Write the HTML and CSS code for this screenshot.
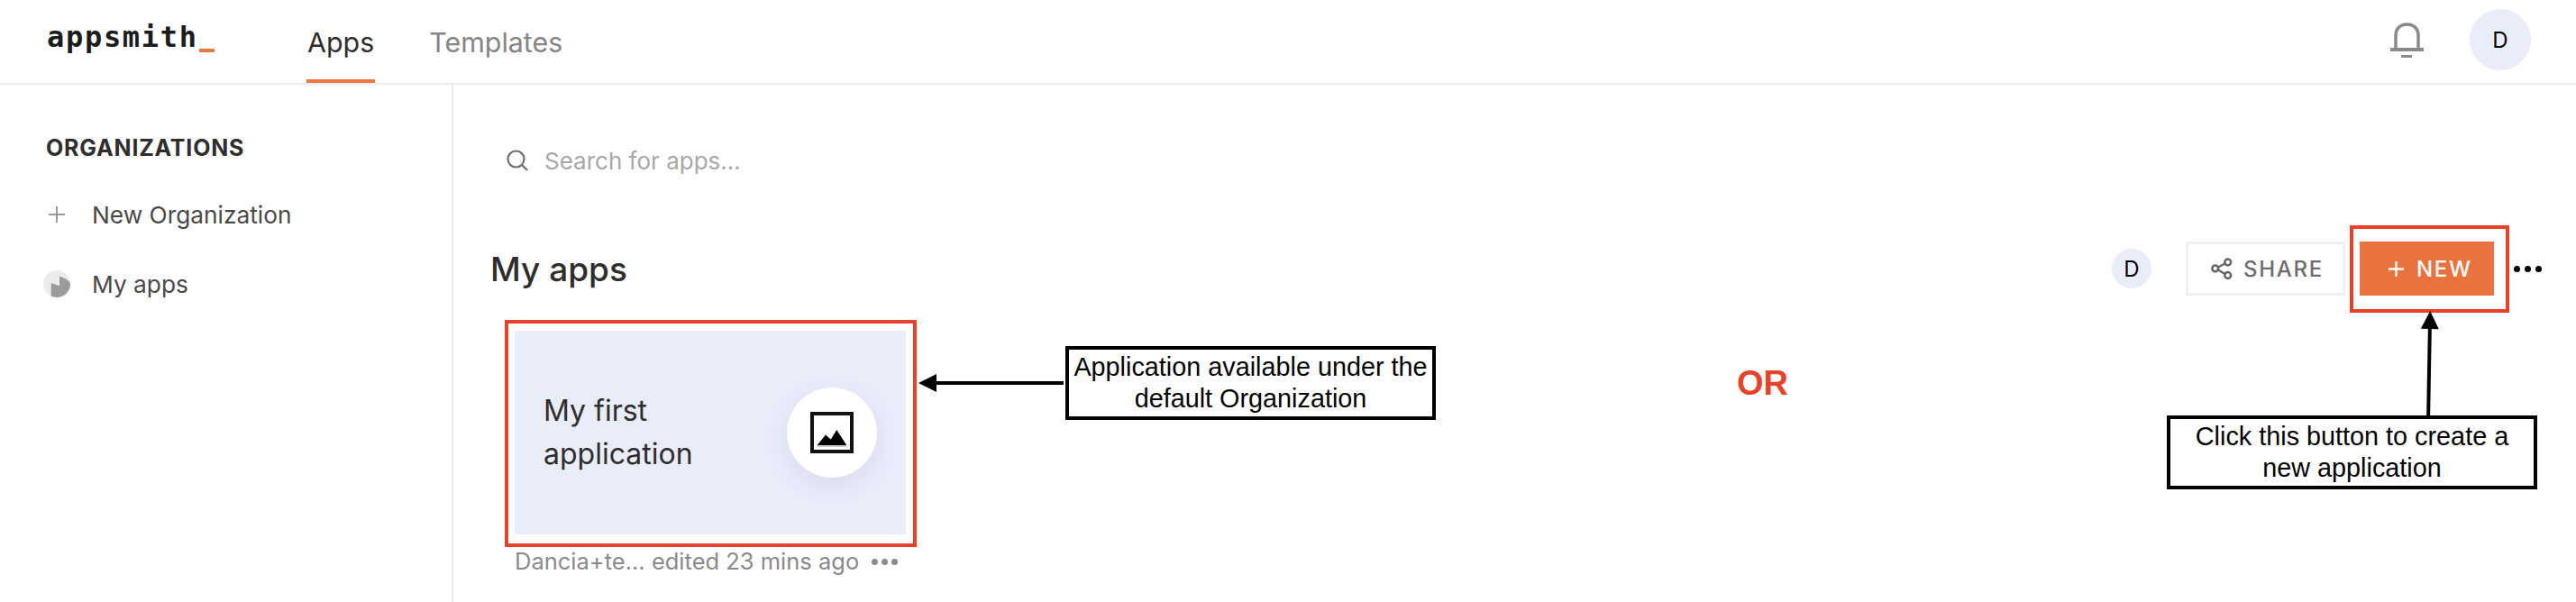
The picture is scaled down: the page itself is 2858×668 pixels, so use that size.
FILE: index.html
```html
<!DOCTYPE html>
<html lang="en">
<head>
    <meta charset="UTF-8">
    <meta name="viewport" content="width=device-width, initial-scale=1.0">
    <title>Appsmith - Apps</title>
    <link rel="stylesheet" href="styles.css">
</head>
<body>
    <header class="topbar">
        <div class="logo">appsmith<span class="logo-cursor"></span></div>
        <nav class="tabs">
            <a class="tab tab-active">Apps</a>
            <a class="tab">Templates</a>
        </nav>
        <div class="topbar-right">
            <svg class="bell" viewBox="0 0 37 39" fill="none" stroke="#8a8a8a">
                <path d="M6 29V14C6 7 11 2 18.500 2S31 7 31 14V29" stroke-width="3.500"/>
                <path d="M0 30H37" stroke-width="4"/>
                <path d="M12 37.500H24" stroke-width="3"/>
            </svg>
            <div class="avatar avatar-big">D</div>
        </div>
    </header>

    <div class="page">
        <aside class="sidebar">
            <h3 class="side-title">ORGANIZATIONS</h3>
            <a class="side-item">
                <span class="side-icon">
                    <svg class="plus-icon" viewBox="0 0 18 18" stroke="#999" stroke-width="2"><path d="M9 0V18M0 9H18"/></svg>
                </span>
                New Organization
            </a>
            <a class="side-item side-item-org">
                <span class="side-icon">
                    <svg class="pie-icon" viewBox="0 0 30 30">
                        <circle cx="15" cy="15" r="15" fill="#ececec"/>
                        <path d="M8.700 14L18 17.300V6.700C23 7.500 30 12 30 15A15 15 0 0 1 8.700 28.600Z" fill="#9b9b9b"/>
                    </svg>
                </span>
                My apps
            </a>
        </aside>

        <main class="content">
            <div class="search">
                <svg class="search-icon" viewBox="0 0 24 24" fill="none" stroke="#716e6e" stroke-width="2.200">
                    <circle cx="10.500" cy="10.500" r="9"/>
                    <path d="M17 17L23 23"/>
                </svg>
                <span class="search-text">Search for apps...</span>
            </div>

            <div class="org-head">
                <h2 class="org-name">My apps</h2>
                <div class="org-actions">
                    <div class="avatar avatar-small">D</div>
                    <button class="btn btn-share">
                        <svg class="share-icon" viewBox="0 0 24 25" fill="none" stroke="#666" stroke-width="2.500">
                            <circle cx="4.700" cy="12" r="3.400"/>
                            <circle cx="18.700" cy="5" r="3.400"/>
                            <circle cx="18.700" cy="19.500" r="3.400"/>
                            <path d="M8 10.500L15.500 6.500M8 13.500L15.500 18"/>
                        </svg>
                        SHARE
                    </button>
                    <button class="btn btn-new">
                        <svg class="new-icon" viewBox="0 0 18 18" stroke="#fff" stroke-width="2.400"><path d="M9 0V18M0 9H18"/></svg>
                        NEW
                    </button>
                    <div class="dots dots-black"><i></i><i></i><i></i></div>
                </div>
            </div>

            <div class="app-card">
                <div class="app-thumb">
                    <div class="app-name">My first<br>application</div>
                    <div class="app-badge">
                        <svg class="image-icon" viewBox="0 0 48 46">
                            <rect x="2" y="2" width="44" height="42" fill="#fff" stroke="#111" stroke-width="4"/>
                            <path d="M7.700 37L17 25.500L22.700 30.500L29.300 20L40.300 37Z" fill="#000"/>
                            <path d="M7.700 38H40.300" stroke="#999" stroke-width="1"/>
                        </svg>
                    </div>
                </div>
                <div class="app-meta">
                    <span>Dancia+te... edited 23 mins ago</span>
                    <div class="dots dots-grey"><i></i><i></i><i></i></div>
                </div>
            </div>
        </main>
    </div>

    <!-- annotations drawn on top of the screenshot -->
    <div class="mark mark-card"></div>
    <div class="mark mark-new"></div>
    <div class="note note-card">Application available under the default Organization</div>
    <div class="note note-new">Click this button to create a new application</div>
    <div class="arrow-left"></div>
    <div class="arrow-up"></div>
    <div class="or-label">OR</div>
</body>
</html>
```

FILE: styles.css
```css
* {
    box-sizing: border-box;
}
html, body {
    height: 100%;
}
body {
    margin: 0;
    position: relative;
    overflow: hidden;
    background: #fff;
    color: #302d2d;
    font-family: Inter, "Noto Sans", sans-serif;
}

/* top bar */
.topbar {
    display: flex;
    align-items: stretch;
    height: 94px;
    padding-left: 52px;
    border-bottom: 2px solid #ececec;
}
.logo {
    width: 288px;
    padding-top: 19px;
    font-family: "DejaVu Sans Mono", monospace;
    font-size: 32px;
    font-weight: bold;
    letter-spacing: 1.700px;
    line-height: 44px;
    color: #1c1c1c;
}
.logo-cursor {
    display: inline-block;
    width: 17px;
    height: 4px;
    margin-left: 1px;
    vertical-align: -6px;
    background: #ef7541;
}
.tabs {
    display: flex;
    gap: 59px;
}
.tab {
    height: 92px;
    padding: 29px 1px 0;
    font-size: 30.400px;
    line-height: 36px;
    color: #858585;
}
.tab-active {
    color: #302d2d;
    border-bottom: 4px solid #ef7541;
}
.topbar-right {
    display: flex;
    align-items: center;
    gap: 51px;
    margin-left: auto;
    padding-right: 50px;
    height: 88px;
}
.bell {
    width: 37px;
    height: 39px;
}
.avatar {
    display: flex;
    align-items: center;
    justify-content: center;
    border-radius: 50%;
    background: #e9ecf9;
    color: #000;
}
.avatar-big {
    width: 68px;
    height: 68px;
    font-size: 24px;
}
.avatar-small {
    width: 44px;
    height: 44px;
    font-size: 24px;
}

/* page body */
.page {
    display: flex;
    height: 574px;
}
.sidebar {
    width: 503px;
    flex-shrink: 0;
    padding: 55px 0 0 51px;
    border-right: 2px solid #ececec;
}
.side-title {
    margin: 0 0 39px;
    font-size: 25px;
    line-height: 30px;
    font-weight: 700;
    letter-spacing: 0.800px;
    color: #302d2d;
}
.side-item {
    display: flex;
    align-items: center;
    height: 40px;
    margin-bottom: 37px;
    font-size: 26.300px;
    color: #4b4848;
}
.side-icon {
    display: flex;
    align-items: center;
    width: 51px;
}
.plus-icon {
    width: 18px;
    height: 18px;
    margin-left: 3px;
}
.pie-icon {
    width: 30px;
    height: 30px;
    margin-left: -3px;
}

.content {
    flex: 1;
    padding: 0 38px 0 41px;
}
.search {
    display: flex;
    align-items: center;
    height: 36px;
    margin: 66px 0 0 18px;
}
.search-icon {
    width: 24px;
    height: 24px;
}
.search-text {
    margin-left: 18px;
    font-size: 26px;
    color: #a9a7a7;
}
.org-head {
    display: flex;
    align-items: center;
    justify-content: space-between;
    height: 60px;
    margin-top: 72px;
}
.org-name {
    margin: 0;
    font-size: 37px;
    font-weight: 500;
    color: #302d2d;
}
.org-actions {
    display: flex;
    align-items: center;
}
.btn {
    display: flex;
    align-items: center;
    height: 60px;
    font-family: inherit;
    font-size: 24px;
    font-weight: 500;
    letter-spacing: 1.700px;
}
.btn-share {
    width: 177px;
    margin-left: 38px;
    padding-left: 25px;
    gap: 12px;
    background: #fff;
    border: 3px solid #f0f0f0;
    color: #6d6d6d;
}
.share-icon {
    width: 24px;
    height: 25px;
}
.btn-new {
    width: 149px;
    margin-left: 16px;
    padding-left: 32px;
    gap: 14px;
    background: #e9733f;
    border: 0;
    color: #fff;
}
.new-icon {
    width: 17px;
    height: 17px;
}
.dots {
    display: flex;
}
.dots i {
    display: block;
    border-radius: 50%;
}
.dots-black {
    gap: 5px;
    margin-left: 22px;
}
.dots-black i {
    width: 7px;
    height: 7px;
    background: #000;
}
.dots-grey {
    gap: 4px;
    margin-left: 14px;
}
.dots-grey i {
    width: 7px;
    height: 7px;
    background: #8a8a8a;
}

/* app card */
.app-card {
    width: 434px;
    margin: 39px 0 0 27px;
}
.app-thumb {
    display: flex;
    align-items: center;
    justify-content: space-between;
    height: 226px;
    padding: 0 32px 0 32px;
    background: #e9ecf9;
}
.app-name {
    font-size: 32px;
    line-height: 48px;
    color: #302d2d;
}
.app-badge {
    display: flex;
    align-items: center;
    justify-content: center;
    width: 100px;
    height: 100px;
    border-radius: 50%;
    background: #fff;
    box-shadow: 0 8px 24px rgba(90, 100, 150, 0.12);
}
.image-icon {
    width: 48px;
    height: 46px;
}
.app-meta {
    display: flex;
    align-items: center;
    margin-top: 12px;
    font-size: 25.500px;
    line-height: 36px;
    color: #8a8a8a;
}

/* annotations */
.mark {
    position: absolute;
    border: 4px solid #e8432a;
}
.mark-card {
    left: 560px;
    top: 355px;
    width: 457px;
    height: 252px;
}
.mark-new {
    left: 2607px;
    top: 250px;
    width: 177px;
    height: 97px;
}
.note {
    position: absolute;
    display: flex;
    align-items: center;
    text-align: center;
    border: 4px solid #000;
    background: #fff;
    color: #000;
    font-family: "Liberation Sans", Arial, sans-serif;
    font-size: 28.800px;
    line-height: 35px;
}
.note-card {
    left: 1182px;
    top: 384px;
    width: 411px;
    height: 82px;
    padding: 0 4px;
}
.note-new {
    left: 2404px;
    top: 461px;
    width: 411px;
    height: 82px;
    padding: 0 20px;
}
.arrow-left {
    position: absolute;
    left: 1037px;
    top: 423px;
    width: 143px;
    height: 4px;
    background: #000;
}
.arrow-left::before {
    content: "";
    position: absolute;
    left: -18px;
    top: -8px;
    border-top: 10px solid transparent;
    border-bottom: 10px solid transparent;
    border-right: 20px solid #000;
}
.arrow-up {
    position: absolute;
    left: 2693px;
    top: 363px;
    width: 4px;
    height: 98px;
    background: #000;
    transform: rotate(1deg);
}
.arrow-up::before {
    content: "";
    position: absolute;
    left: -8px;
    top: -18px;
    border-left: 10px solid transparent;
    border-right: 10px solid transparent;
    border-bottom: 20px solid #000;
}
.or-label {
    position: absolute;
    left: 1927px;
    top: 403px;
    font-family: "Liberation Sans", Arial, sans-serif;
    font-size: 38px;
    font-weight: bold;
    line-height: 44px;
    color: #e8432a;
}
```
